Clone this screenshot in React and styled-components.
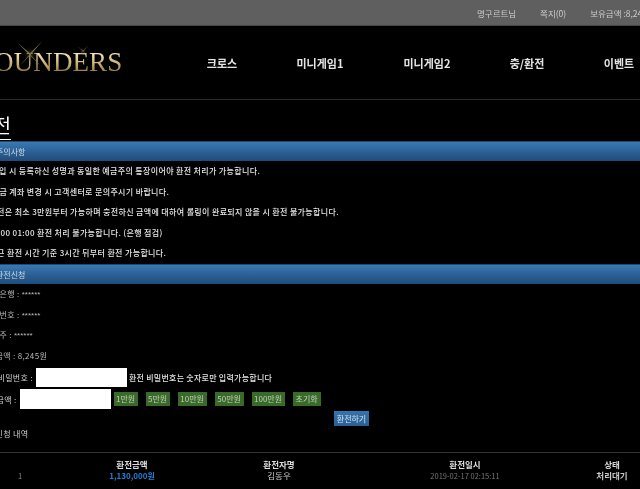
import React from "react";
import styled, { createGlobalStyle } from "styled-components";

const Global = createGlobalStyle`
  html, body {
    margin: 0;
    padding: 0;
    background: #000;
    width: 640px;
    height: 489px;
    overflow: hidden;
  }
  #root {
    width: 640px;
    height: 489px;
    overflow: hidden;
  }
`;

const Page = styled.div`
  width: 640px;
  height: 489px;
  overflow: hidden;
  background: #000;
  color: #dcdcdc;
  font-family: "Noto Sans CJK KR", "Noto Sans", sans-serif;
  font-size: 8px;
  filter: blur(0.35px);
`;

const TopBar = styled.div`
  height: 25px;
  background: #5f5f5f;
  border-bottom: 1px solid #444;
  display: flex;
  align-items: center;
  gap: 24px;
  padding-left: 477px;
  white-space: nowrap;
  color: #cccccc;
  font-size: 8.5px;
  overflow: hidden;
`;

const TopItem = styled.span`
  flex: none;
`;

const Header = styled.div`
  height: 73px;
  border-bottom: 1px solid #2a2a2a;
  display: flex;
  align-items: center;
  overflow: hidden;
`;

const Logo = styled.div`
  position: relative;
  flex: none;
  width: 191px;
  margin-left: -21px;
  height: 40px;
`;

const LogoText = styled.div`
  font-family: "Liberation Serif", serif;
  font-size: 27px;
  line-height: 38px;
  letter-spacing: 0.1px;
  white-space: nowrap;
  background: linear-gradient(180deg, #fff3c8 20%, #c9b06f 55%, #7d6735 85%);
  -webkit-background-clip: text;
  background-clip: text;
  color: transparent;
`;

const Sparkle = styled.svg`
  position: absolute;
  left: ${(p) => p.$left}px;
  top: ${(p) => p.$top}px;
`;

const Nav = styled.nav`
  flex: none;
  display: grid;
  grid-template-columns: 108px 88px 126px 74px 110px;
  margin-left: -2px;
  width: 506px;
`;

const NavItem = styled.a`
  text-align: center;
  color: #e4e4e4;
  font-size: 11px;
  font-weight: 700;
  white-space: nowrap;
`;

const Title = styled.h1`
  margin: 0;
  height: 41px;
  box-sizing: border-box;
  padding-top: 14px;
  margin-left: -24px;
  font-size: 19px;
  line-height: 22px;
  font-weight: 400;
  color: #fff;
  white-space: nowrap;
`;

const TitleText = styled.span`
  border-bottom: 1px solid #fff;
  padding-bottom: 1px;
`;

const SectionBar = styled.div`
  height: 20px;
  line-height: 20px;
  text-indent: -4px;
  border-top: 1px solid #1d4a78;
  box-sizing: border-box;
  color: #cfd8e2;
  font-size: 8px;
  white-space: nowrap;
  overflow: hidden;
  background: linear-gradient(180deg, #3a79b2 0%, #2a5f94 55%, #1f4c7a 100%);
`;

const Line = styled.div`
  height: 20.6px;
  line-height: 20.6px;
  margin-left: ${(p) => p.$offset ?? -16}px;
  white-space: nowrap;
  font-size: 8px;
  font-weight: ${(p) => (p.$dim ? 400 : 500)};
  letter-spacing: 0.35px;
  color: ${(p) => (p.$dim ? "#b8b8b8" : "#e6e6e6")};
`;

const Masked = styled.span`
  font-family: "Liberation Sans", sans-serif;
  font-size: 8px;
  letter-spacing: 0;
`;

const FieldRow = styled.div`
  display: flex;
  align-items: center;
  height: ${(p) => p.$h}px;
  margin-top: 2px;
  margin-left: ${(p) => p.$offset}px;
  white-space: nowrap;
  font-size: 8px;
  letter-spacing: 0.35px;
  color: #d4d4d4;
`;

const Input = styled.div`
  flex: none;
  width: 91px;
  height: ${(p) => p.$h}px;
  margin-left: 3px;
  background: #fff;
`;

const Hint = styled.span`
  margin-left: 2px;
  letter-spacing: 0.25px;
  font-weight: 500;
  color: #e2e2e2;
`;

const ChipRow = styled.div`
  display: flex;
  gap: 8px;
  margin-left: 3px;
`;

const Chip = styled.button`
  height: 14px;
  width: ${(p) => p.$w}px;
  padding: 0;
  border: none;
  background: #3a6a2a;
  color: #bcd0b4;
  font-family: inherit;
  font-size: 8px;
  line-height: 14px;
`;

const SubmitRow = styled.div`
  display: flex;
  height: 15px;
  margin-top: 2px;
  padding-left: 334px;
`;

const Submit = styled.button`
  width: 35px;
  height: 15px;
  padding: 0;
  border: none;
  background: linear-gradient(180deg, #3573ad, #2a6098);
  color: #d5e0ea;
  font-family: inherit;
  font-size: 8px;
  line-height: 15px;
`;

const History = styled.div`
  height: 27px;
  line-height: 16px;
  font-size: 8px;
  letter-spacing: 0.35px;
  color: #cfcfcf;
  box-sizing: border-box;
  border-bottom: 1px solid #333;
`;

const HistoryText = styled.div`
  margin-left: -20px;
`;

const Table = styled.div`
  display: grid;
  grid-template-columns: 80px 144px 150px 222px 72px;
  margin-left: -20px;
  padding-top: 6px;
  font-size: 8.5px;
  line-height: 11px;
  text-align: center;
  white-space: nowrap;
`;

const Head = styled.div`
  color: #dddddd;
  font-weight: 700;
`;

const Cell = styled.div`
  color: ${(p) => p.$color || "#c8c8c8"};
  font-weight: ${(p) => (p.$bold ? 700 : 400)};
  font-size: ${(p) => p.$size || 8.5}px;
`;

const StarBurst = ({ left, top, size }) => (
  <Sparkle $left={left} $top={top} width={size} height={size} viewBox="0 0 40 40">
    <defs>
      <radialGradient id={`glow${left}`}>
        <stop offset="0" stopColor="#5a5030" stopOpacity="0.6" />
        <stop offset="1" stopColor="#000" stopOpacity="0" />
      </radialGradient>
    </defs>
    <circle cx="20" cy="20" r="14" fill={`url(#glow${left})`} />
    <path d="M1 3 L20 19 L39 0 L21 21 L37 39 L20 22 L4 38 L19 21 Z" fill="#7d7356" />
  </Sparkle>
);

const notices = [
  { text: "- 가입 시 등록하신 성명과 동일한 예금주의 통장이어야 환전 처리가 가능합니다.", offset: -14 },
  { text: "입출금 계좌 변경 시 고객센터로 문의주시기 바랍니다." },
  { text: "- 환전은 최소 3만원부터 가능하며 충전하신 금액에 대하여 롤링이 완료되지 않을 시 환전 불가능합니다." },
  { text: "00:00 01:00 환전 처리 불가능합니다. (은행 점검)", offset: -12 },
  { text: "- 최근 환전 시간 기준 3시간 뒤부터 환전 가능합니다." },
];

const chips = [
  ["1만원", 24],
  ["5만원", 24],
  ["10만원", 29],
  ["50만원", 29],
  ["100만원", 33],
  ["초기화", 28],
];

export default function App() {
  return (
    <Page>
      <Global />
      <TopBar>
        <TopItem>명구르트님</TopItem>
        <TopItem>쪽지(0)</TopItem>
        <TopItem>보유금액 :8,245원</TopItem>
      </TopBar>
      <Header>
        <Logo>
          <LogoText>FOUNDERS</LogoText>
          <StarBurst left={38} top={-2} size={26} />
          <StarBurst left={98} top={2} size={12} />
        </Logo>
        <Nav>
          <NavItem>크로스</NavItem>
          <NavItem>미니게임1</NavItem>
          <NavItem>미니게임2</NavItem>
          <NavItem>충/환전</NavItem>
          <NavItem>이벤트</NavItem>
        </Nav>
      </Header>
      <Title>
        <TitleText>환전</TitleText>
      </Title>
      <SectionBar>주의사항</SectionBar>
      {notices.map(({ text, offset }) => (
        <Line key={text} $offset={offset}>{text}</Line>
      ))}
      <SectionBar>환전신청</SectionBar>
      <Line $dim>출금은행 : <Masked>******</Masked></Line>
      <Line $dim>계좌번호 : <Masked>******</Masked></Line>
      <Line $dim>예금주 : <Masked>******</Masked></Line>
      <Line $dim $offset={-20}>보유금액 : 8,245원</Line>
      <FieldRow $h={19} $offset={-18}>
        환전비밀번호 :
        <Input $h={19} />
        <Hint>환전 비밀번호는 숫자로만 입력가능합니다</Hint>
      </FieldRow>
      <FieldRow $h={20} $offset={-19}>
        환전금액 :
        <Input $h={20} />
        <ChipRow>
          {chips.map(([label, w]) => (
            <Chip key={label} $w={w}>{label}</Chip>
          ))}
        </ChipRow>
      </FieldRow>
      <SubmitRow>
        <Submit>환전하기</Submit>
      </SubmitRow>
      <History>
        <HistoryText>환전신청 내역</HistoryText>
      </History>
      <Table>
        <Head />
        <Head>환전금액</Head>
        <Head>환전자명</Head>
        <Head>환전일시</Head>
        <Head>상태</Head>
        <Cell $color="#8a8a8a" $size={7.5}>1</Cell>
        <Cell $color="#1f7fd6" $bold $size={8}>1,130,000원</Cell>
        <Cell>김동우</Cell>
        <Cell $color="#777" $size={7.5}>2019-02-17 02:15:11</Cell>
        <Cell $bold>처리대기</Cell>
      </Table>
    </Page>
  );
}
